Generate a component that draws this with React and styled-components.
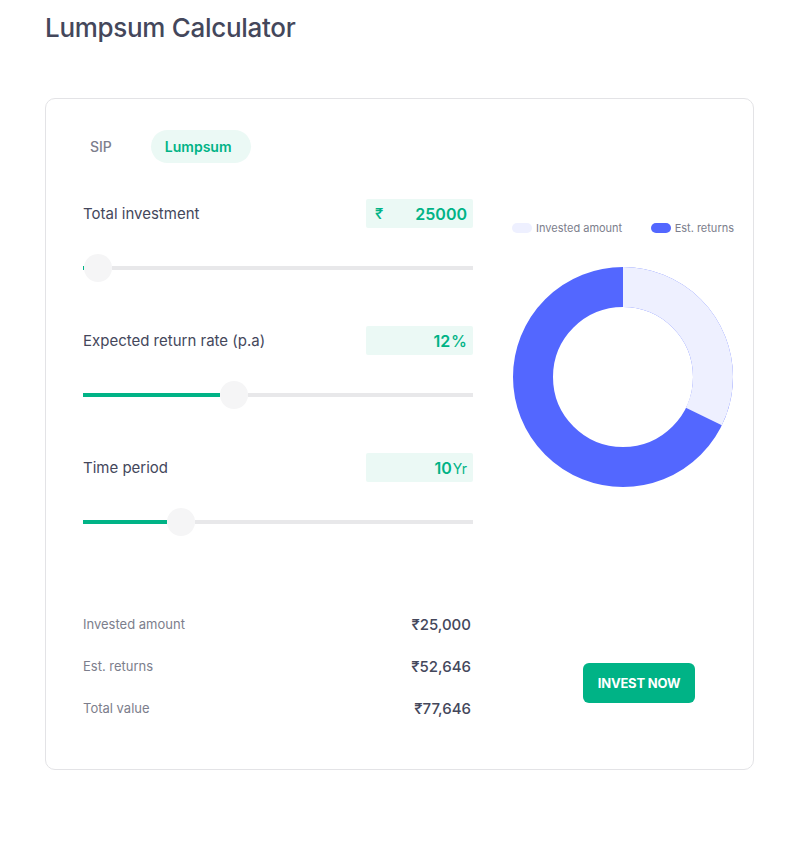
import React from 'react';
import styled, { createGlobalStyle } from 'styled-components';

const GlobalStyle = createGlobalStyle`
  body {
    margin: 0;
    background: #ffffff;
    font-family: Inter, "Noto Sans", sans-serif;
  }
`;

const Page = styled.div`
  padding: 10px 33px 60px 45px;
`;

const Title = styled.h1`
  margin: 0;
  font-size: 26px;
  line-height: 36px;
  font-weight: 500;
  letter-spacing: -0.3px;
  color: #44475b;
`;

const Card = styled.div`
  margin-top: 52px;
  border: 1px solid #e3e3e6;
  border-radius: 10px;
  display: flex;
  padding: 31px 0 40px 37px;
  box-sizing: content-box;
  width: 670px;
`;

const LeftCol = styled.div`
  width: 390px;
  display: flex;
  flex-direction: column;
`;

const RightCol = styled.div`
  width: 222px;
  margin-left: 39px;
  padding-top: 91px;
  display: flex;
  flex-direction: column;
  align-items: center;
`;

const Tabs = styled.div`
  display: flex;
  align-items: center;
  gap: 32px;
`;

const Tab = styled.div`
  height: 33px;
  padding: ${({ $active }) => ($active ? '0 19px 0 14px' : '0 7px')};
  border-radius: 17px;
  display: flex;
  align-items: center;
  font-size: 14px;
  font-weight: ${({ $active }) => ($active ? 600 : 500)};
  color: ${({ $active }) => ($active ? '#00b386' : '#7c7e8c')};
  background: ${({ $active }) => ($active ? '#ebf9f5' : 'transparent')};
`;

const Inputs = styled.div`
  margin-top: 36px;
  display: flex;
  flex-direction: column;
  gap: 44px;
`;

const InputRow = styled.div`
  display: flex;
  flex-direction: column;
  gap: 26px;
`;

const InputHead = styled.div`
  display: flex;
  justify-content: space-between;
  align-items: center;
`;

const Label = styled.div`
  font-size: 15px;
  color: #44475b;
`;

const ValueBox = styled.div`
  width: 107px;
  height: 29px;
  box-sizing: border-box;
  padding: 0 6px 0 9px;
  background: #ebf9f5;
  border-radius: 2px;
  display: flex;
  align-items: center;
  justify-content: ${({ $prefix }) => ($prefix ? 'space-between' : 'flex-end')};
  color: #00b386;
  font-size: 16px;
  font-weight: 600;
`;

const Prefix = styled.span`
  font-size: 15px;
  font-weight: 500;
`;

const Suffix = styled.span`
  font-size: ${({ $small }) => ($small ? '14px' : '16px')};
  font-weight: ${({ $small }) => ($small ? 400 : 500)};
  margin-left: 1px;
`;

const Slider = styled.div`
  display: flex;
  align-items: center;
  height: 28px;
`;

const Fill = styled.div`
  height: 4px;
  background: #00b386;
  flex-shrink: 0;
`;

const Thumb = styled.div`
  width: 28px;
  height: 28px;
  border-radius: 50%;
  background: #f5f5f6;
  flex-shrink: 0;
`;

const Rest = styled.div`
  flex: 1;
  height: 4px;
  background: #e8e8ea;
`;

const Summary = styled.div`
  margin-top: 67px;
  display: flex;
  flex-direction: column;
`;

const SummaryRow = styled.div`
  height: 42px;
  display: flex;
  align-items: center;
  justify-content: space-between;
  padding-right: 2px;
`;

const SummaryLabel = styled.div`
  font-size: 13px;
  color: #7c7e8c;
`;

const SummaryValue = styled.div`
  font-size: 15px;
  font-weight: 500;
  color: #44475b;
`;

const Legend = styled.div`
  width: 100%;
  display: flex;
  justify-content: space-between;
  align-items: center;
`;

const LegendItem = styled.div`
  display: flex;
  align-items: center;
  gap: 4px;
  font-size: 11px;
  color: #7c7e8c;
`;

const Swatch = styled.span`
  width: 20px;
  height: 10px;
  border-radius: 5px;
  background: ${({ $color }) => $color};
`;

const Chart = styled.svg`
  margin-top: 32px;
  display: block;
`;

const Button = styled.button`
  margin-top: auto;
  margin-bottom: 26px;
  margin-left: 32px;
  width: 112px;
  height: 40px;
  border: none;
  border-radius: 6px;
  background: #00b386;
  color: #ffffff;
  font-family: Inter, "Noto Sans", sans-serif;
  font-size: 13px;
  font-weight: 700;
  letter-spacing: -0.2px;
  text-transform: uppercase;
  cursor: pointer;
`;

const TRACK = 390;
const THUMB = 28;

const inputs = [
  { label: 'Total investment', value: '25000', prefix: '₹', min: 500, max: 10000000, num: 25000 },
  { label: 'Expected return rate (p.a)', value: '12', suffix: '%', min: 1, max: 30, num: 12 },
  { label: 'Time period', value: '10', suffix: 'Yr', small: true, min: 1, max: 40, num: 10 },
];

const summary = [
  ['Invested amount', '₹25,000'],
  ['Est. returns', '₹52,646'],
  ['Total value', '₹77,646'],
];

function Donut() {
  const r = 90;
  const c = 2 * Math.PI * r;
  const invested = 25000 / 77646;
  return (
    <Chart width="220" height="220" viewBox="0 0 220 220">
      <circle cx="110" cy="110" r={r} fill="none" stroke="#5367ff" strokeWidth="40" />
      <circle
        cx="110"
        cy="110"
        r={r}
        fill="none"
        stroke="#eef0ff"
        strokeWidth="40"
        strokeDasharray={`${c * invested} ${c}`}
        transform="rotate(-90 110 110)"
      />
    </Chart>
  );
}

export default function App() {
  return (
    <Page>
      <GlobalStyle />
      <Title>Lumpsum Calculator</Title>
      <Card>
        <LeftCol>
          <Tabs>
            <Tab>SIP</Tab>
            <Tab $active>Lumpsum</Tab>
          </Tabs>
          <Inputs>
            {inputs.map((it) => {
              const pct = (it.num - it.min) / (it.max - it.min);
              const fill = Math.max(1, pct * (TRACK - THUMB));
              return (
                <InputRow key={it.label}>
                  <InputHead>
                    <Label>{it.label}</Label>
                    <ValueBox $prefix={!!it.prefix}>
                      {it.prefix && <Prefix>{it.prefix}</Prefix>}
                      <span>
                        {it.value}
                        {it.suffix && <Suffix $small={it.small}>{it.suffix}</Suffix>}
                      </span>
                    </ValueBox>
                  </InputHead>
                  <Slider>
                    <Fill style={{ width: fill }} />
                    <Thumb />
                    <Rest />
                  </Slider>
                </InputRow>
              );
            })}
          </Inputs>
          <Summary>
            {summary.map(([l, v]) => (
              <SummaryRow key={l}>
                <SummaryLabel>{l}</SummaryLabel>
                <SummaryValue>{v}</SummaryValue>
              </SummaryRow>
            ))}
          </Summary>
        </LeftCol>
        <RightCol>
          <Legend>
            <LegendItem>
              <Swatch $color="#eef0ff" />
              Invested amount
            </LegendItem>
            <LegendItem>
              <Swatch $color="#5367ff" />
              Est. returns
            </LegendItem>
          </Legend>
          <Donut />
          <Button>Invest now</Button>
        </RightCol>
      </Card>
    </Page>
  );
}
